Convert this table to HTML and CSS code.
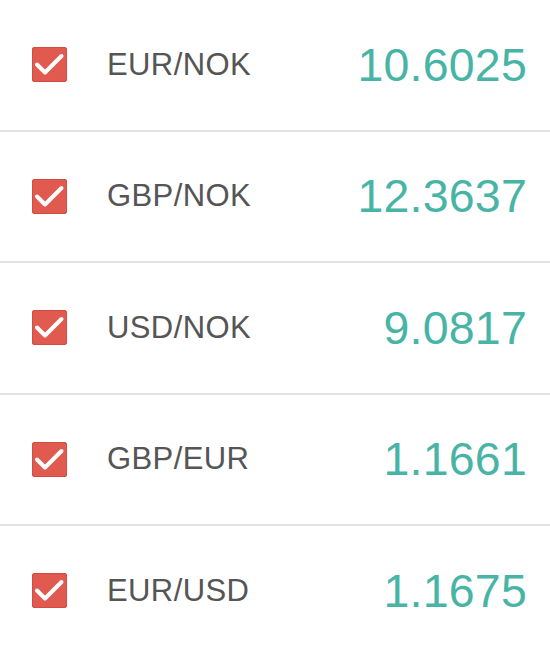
FILE: index.html
```html
<!DOCTYPE html>
<html>
<head>
<meta charset="utf-8">
<link rel="stylesheet" href="styles.css">
</head>
<body>
<ul class="list">
  <li class="row">
    <span class="check"><svg viewBox="0 0 35 35" width="35" height="35"><polyline points="5,17.5 13,25.5 29.5,9" fill="none" stroke="#fff" stroke-width="4" stroke-linecap="round" stroke-linejoin="round"/></svg></span>
    <span class="pair">EUR/NOK</span>
    <span class="rate">10.6025</span>
  </li>
  <li class="row">
    <span class="check"><svg viewBox="0 0 35 35" width="35" height="35"><polyline points="5,17.5 13,25.5 29.5,9" fill="none" stroke="#fff" stroke-width="4" stroke-linecap="round" stroke-linejoin="round"/></svg></span>
    <span class="pair">GBP/NOK</span>
    <span class="rate">12.3637</span>
  </li>
  <li class="row">
    <span class="check"><svg viewBox="0 0 35 35" width="35" height="35"><polyline points="5,17.5 13,25.5 29.5,9" fill="none" stroke="#fff" stroke-width="4" stroke-linecap="round" stroke-linejoin="round"/></svg></span>
    <span class="pair">USD/NOK</span>
    <span class="rate">9.0817</span>
  </li>
  <li class="row">
    <span class="check"><svg viewBox="0 0 35 35" width="35" height="35"><polyline points="5,17.5 13,25.5 29.5,9" fill="none" stroke="#fff" stroke-width="4" stroke-linecap="round" stroke-linejoin="round"/></svg></span>
    <span class="pair">GBP/EUR</span>
    <span class="rate">1.1661</span>
  </li>
  <li class="row">
    <span class="check"><svg viewBox="0 0 35 35" width="35" height="35"><polyline points="5,17.5 13,25.5 29.5,9" fill="none" stroke="#fff" stroke-width="4" stroke-linecap="round" stroke-linejoin="round"/></svg></span>
    <span class="pair">EUR/USD</span>
    <span class="rate">1.1675</span>
  </li>
</ul>
</body>
</html>
```
FILE: styles.css
```css
html, body {
  margin: 0;
  padding: 0;
  background: #fff;
  font-family: "Liberation Sans", Arial, sans-serif;
}
.list {
  list-style: none;
  margin: 0;
  padding: 0;
}
.row {
  display: flex;
  align-items: center;
  height: 129.5px;
  border-bottom: 2px solid #e3e3e3;
  padding: 0 23px 0 32px;
}
.row:last-child {
  border-bottom: none;
}
.check {
  display: flex;
  width: 35px;
  height: 35px;
  background: #e05a4f;
  border-radius: 3px;
  box-shadow: inset 0 0 0 1px #d24c42;
  flex-shrink: 0;
}
.pair {
  margin-left: 40px;
  font-size: 31px;
  letter-spacing: 0.4px;
  color: #555;
  flex: 1;
}
.rate {
  font-size: 46.5px;
  letter-spacing: 0.2px;
  color: #48b4a5;
}
```
